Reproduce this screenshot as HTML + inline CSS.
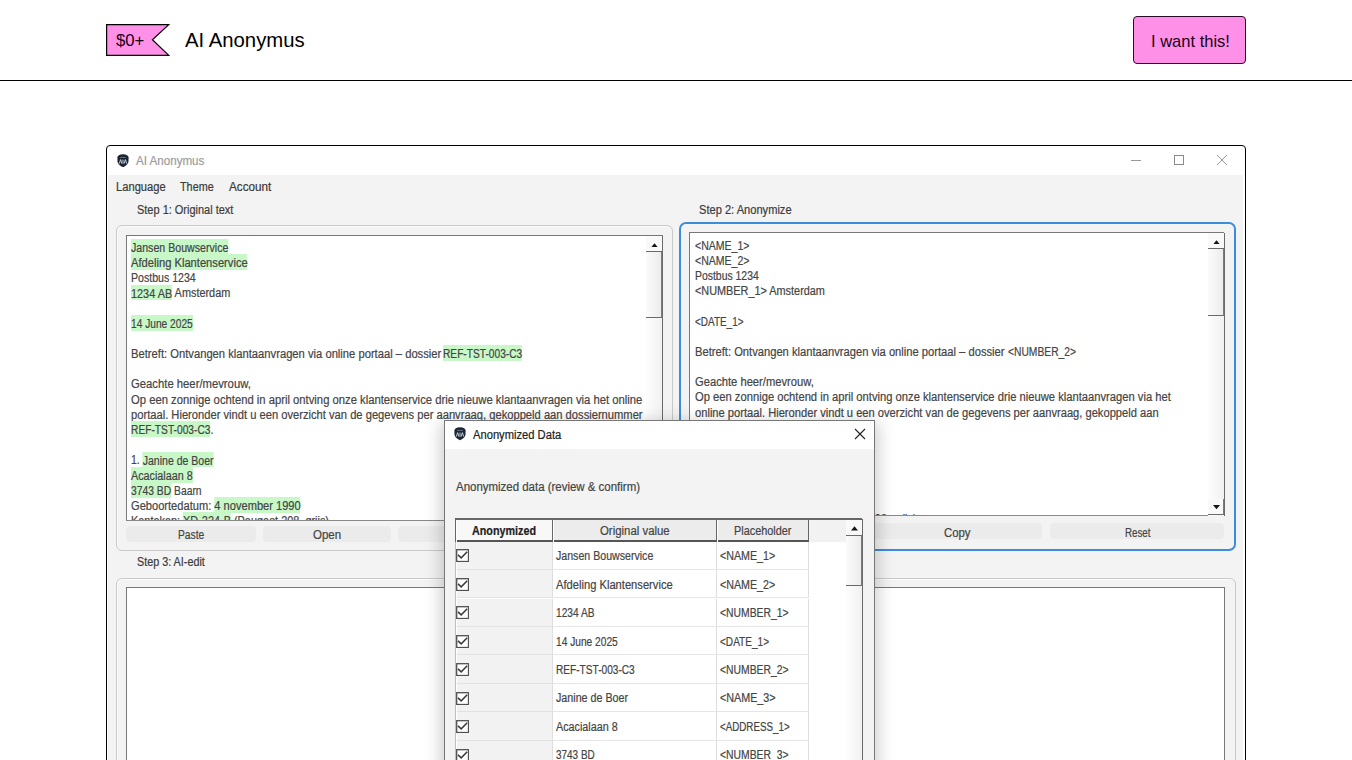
<!DOCTYPE html><html><head><meta charset="utf-8"><style>
*{box-sizing:border-box;margin:0;padding:0}
html,body{width:1352px;height:760px;overflow:hidden;background:#fff;font-family:"Liberation Sans",sans-serif;color:#222;position:relative}
div{position:absolute}
.t{white-space:pre;line-height:normal;-webkit-text-stroke:0.2px currentColor}
.frame{border:1px solid #c9c9c9;border-radius:6px;box-shadow:inset 1px 1px 0 #fbfbfb}
.tb{background:#fff;border-top:1px solid #777;border-left:1px solid #777;border-bottom:1px solid #8a8a8a;overflow:hidden}
.lines{white-space:pre;font-size:12px;line-height:15.1px;color:#333}
.hl{background:#c8f7c8;padding:1.84px 0 0 0}
.btn{background:#ebebeb;border-radius:4px;font-size:12px;color:#333;text-align:center;line-height:15px}
</style></head><body>
<svg style="position:absolute;left:106px;top:24px" width="64" height="33" viewBox="0 0 64 33"><polygon points="0.6,0.6 62.8,0.6 46.4,15.8 62.8,31.4 0.6,31.4" fill="#ff90e8" stroke="#000" stroke-width="1.2"/></svg>
<div class="t" style="left:115.8px;top:32.46px;font-size:16px;color:#1a0019;font-weight:normal;-webkit-text-stroke:0"><span id="f0" style="display:inline-block;transform:scaleX(1.0449);transform-origin:0 50%;">$0+</span></div>
<div class="t" style="left:185px;top:29.15px;font-size:19.6px;color:#000;font-weight:normal;-webkit-text-stroke:0"><span id="f1" style="display:inline-block;transform:scaleX(1.0366);transform-origin:0 50%;">AI Anonymus</span></div>
<div style="left:1133px;top:16px;width:113px;height:48px;background:#ff90e8;border:1px solid #2a0a26;border-radius:4px"></div>
<div class="t" style="left:1150.5px;top:31.98px;font-size:16.2px;color:#1a0019;font-weight:normal;-webkit-text-stroke:0"><span id="f2" style="display:inline-block;transform:scaleX(1.0201);transform-origin:0 50%;">I want this!</span></div>
<div style="left:0;top:80px;width:1352px;height:1px;background:#000"></div>
<div style="left:106px;top:145px;width:1140px;height:700px;border:1.6px solid #000;border-radius:4px 4px 0 0;background:#fff"></div>
<div style="left:107.5px;top:175px;width:1135.5px;height:600px;background:#f3f3f3"></div>
<svg style="position:absolute;left:117px;top:153.5px" width="12" height="13.5" viewBox="0 0 12 13.5"><path d="M0.4 3.6 Q0.6 0.3 6 0.2 Q11.4 0.3 11.6 3.6 L11.5 7.6 Q11 11.3 6 13.3 Q1 11.3 0.5 7.6 Z" fill="#1b2535"/><path d="M2.3 9.6 L3.6 5.6 L4.9 9.6 M6 5.6 L6 9.6 M7.1 9.6 L8.4 5.6 L9.7 9.6" stroke="#d5dbe4" stroke-width="0.9" fill="none"/><path d="M3.2 3.4 H8.8" stroke="#7d8a9c" stroke-width="0.8"/></svg>
<div class="t" style="left:136px;top:154.35px;font-size:12px;color:#9c9c9c;font-weight:normal;"><span id="f3" style="display:inline-block;transform:scaleX(0.9668);transform-origin:0 50%;">AI Anonymus</span></div>
<div style="left:1131px;top:160px;width:10px;height:1px;background:#9a9a9a"></div>
<div style="left:1174px;top:155px;width:10px;height:10px;border:1px solid #8a8a8a"></div>
<svg style="position:absolute;left:1216px;top:154px" width="12" height="12" viewBox="0 0 12 12"><path d="M1 1 L11 11 M11 1 L1 11" stroke="#9a9a9a" stroke-width="1"/></svg>
<div class="t" style="left:116px;top:180.05px;font-size:12px;color:#3a3a3a;font-weight:normal;"><span id="f4" style="display:inline-block;transform:scaleX(0.9308);transform-origin:0 50%;">Language</span></div>
<div class="t" style="left:180px;top:180.05px;font-size:12px;color:#3a3a3a;font-weight:normal;"><span id="f5" style="display:inline-block;transform:scaleX(0.9025);transform-origin:0 50%;">Theme</span></div>
<div class="t" style="left:229px;top:180.05px;font-size:12px;color:#3a3a3a;font-weight:normal;"><span id="f6" style="display:inline-block;transform:scaleX(0.9767);transform-origin:0 50%;">Account</span></div>
<div class="t" style="left:137px;top:202.55px;font-size:12px;color:#3c3c3c;font-weight:normal;"><span id="f7" style="display:inline-block;transform:scaleX(0.9146);transform-origin:0 50%;">Step 1: Original text</span></div>
<div class="t" style="left:699px;top:202.55px;font-size:12px;color:#3c3c3c;font-weight:normal;"><span id="f8" style="display:inline-block;transform:scaleX(0.9253);transform-origin:0 50%;">Step 2: Anonymize</span></div>
<div class="t" style="left:137px;top:555.35px;font-size:12px;color:#3c3c3c;font-weight:normal;"><span id="f9" style="display:inline-block;transform:scaleX(0.8995);transform-origin:0 50%;">Step 3: AI-edit</span></div>
<div class="frame" style="left:116px;top:225px;width:557px;height:326px"></div>
<div style="left:679px;top:222px;width:557px;height:329px;border:2px solid #3a8ddc;border-radius:7px"></div>
<div class="frame" style="left:116px;top:578px;width:1120px;height:300px"></div>
<div class="tb" style="left:126px;top:235px;width:537px;height:286px"></div>
<div style="left:127px;top:236px;width:519px;height:284px;overflow:hidden">
<div class="t" style="left:3.5999999999999943px;top:4.95px;font-size:12px;color:#444;font-weight:normal;line-height:normal"><span id="f10" style="display:inline-block;transform:scaleX(0.8851);transform-origin:0 50%;"><span class="hl">Jansen Bouwservice</span></span></div>
<div class="t" style="left:3.5999999999999943px;top:20.12px;font-size:12px;color:#444;font-weight:normal;line-height:normal"><span id="f11" style="display:inline-block;transform:scaleX(0.9305);transform-origin:0 50%;"><span class="hl">Afdeling Klantenservice</span></span></div>
<div class="t" style="left:3.5999999999999943px;top:35.29px;font-size:12px;color:#444;font-weight:normal;line-height:normal"><span id="f12" style="display:inline-block;transform:scaleX(0.8818);transform-origin:0 50%;">Postbus 1234</span></div>
<div class="t" style="left:3.5999999999999943px;top:50.46px;font-size:12px;color:#444;font-weight:normal;line-height:normal"><span id="f13" style="display:inline-block;transform:scaleX(0.9077);transform-origin:0 50%;"><span class="hl">1234 AB</span> Amsterdam</span></div>
<div class="t" style="left:3.5999999999999943px;top:80.80px;font-size:12px;color:#444;font-weight:normal;line-height:normal"><span id="f14" style="display:inline-block;transform:scaleX(0.8486);transform-origin:0 50%;"><span class="hl">14 June 2025</span></span></div>
<div class="t" style="left:3.5999999999999943px;top:111.14px;font-size:12px;color:#444;font-weight:normal;line-height:normal"><span id="f15" style="display:inline-block;transform:scaleX(0.9340);transform-origin:0 50%;">Betreft: Ontvangen klantaanvragen via online portaal – dossier</span></div>
<div class="t" style="left:315.6px;top:111.14px;font-size:12px;color:#444;font-weight:normal;line-height:normal"><span id="f16" style="display:inline-block;transform:scaleX(0.8487);transform-origin:0 50%;"><span class="hl">REF-TST-003-C3</span></span></div>
<div class="t" style="left:3.5999999999999943px;top:141.48px;font-size:12px;color:#444;font-weight:normal;line-height:normal"><span id="f17" style="display:inline-block;transform:scaleX(0.9405);transform-origin:0 50%;">Geachte heer/mevrouw,</span></div>
<div class="t" style="left:3.5999999999999943px;top:156.65px;font-size:12px;color:#444;font-weight:normal;line-height:normal"><span id="f18" style="display:inline-block;transform:scaleX(0.9381);transform-origin:0 50%;">Op een zonnige ochtend in april ontving onze klantenservice drie nieuwe klantaanvragen via het online</span></div>
<div class="t" style="left:3.5999999999999943px;top:171.82px;font-size:12px;color:#444;font-weight:normal;line-height:normal"><span id="f19" style="display:inline-block;transform:scaleX(0.9307);transform-origin:0 50%;">portaal. Hieronder vindt u een overzicht van de gegevens per aanvraag, gekoppeld aan dossiernummer</span></div>
<div class="t" style="left:3.5999999999999943px;top:186.99px;font-size:12px;color:#444;font-weight:normal;line-height:normal"><span id="f20" style="display:inline-block;transform:scaleX(0.8511);transform-origin:0 50%;"><span class="hl">REF-TST-003-C3</span>.</span></div>
<div class="t" style="left:3.5999999999999943px;top:217.33px;font-size:12px;color:#444;font-weight:normal;line-height:normal"><span id="f21" style="display:inline-block;transform:scaleX(0.8781);transform-origin:0 50%;">1. <span class="hl">Janine de Boer</span></span></div>
<div class="t" style="left:3.5999999999999943px;top:232.50px;font-size:12px;color:#444;font-weight:normal;line-height:normal"><span id="f22" style="display:inline-block;transform:scaleX(0.8980);transform-origin:0 50%;"><span class="hl">Acacialaan 8</span></span></div>
<div class="t" style="left:3.5999999999999943px;top:247.67px;font-size:12px;color:#444;font-weight:normal;line-height:normal"><span id="f23" style="display:inline-block;transform:scaleX(0.8602);transform-origin:0 50%;"><span class="hl">3743 BD</span> Baarn</span></div>
<div class="t" style="left:3.5999999999999943px;top:262.84px;font-size:12px;color:#444;font-weight:normal;line-height:normal"><span id="f24" style="display:inline-block;transform:scaleX(0.9250);transform-origin:0 50%;">Geboortedatum: <span class="hl">4 november 1990</span></span></div>
<div class="t" style="left:3.5999999999999943px;top:278.01px;font-size:12px;color:#444;font-weight:normal;line-height:normal"><span id="f25" style="display:inline-block;transform:scaleX(0.9077);transform-origin:0 50%;">Kenteken: <span class="hl">XD-224-B</span> (Peugeot 208, grijs)</span></div>
</div>
<div style="left:646px;top:236px;width:17px;height:284.5px;background:linear-gradient(to right,#fdfdfd,#f1f1f1);border-right:1px solid #6a6a6a"></div><div style="left:646px;top:236px;width:16px;height:16px;background:#f9f9f9;border-bottom:1.6px solid #6a6a6a"></div><svg style="position:absolute;left:651px;top:242.5px" width="7" height="4.5" viewBox="0 0 7 4.5"><path d="M0 4.5 L3.5 0.3 L7 4.5Z" fill="#151515"/></svg><div style="left:646px;top:252px;width:16px;height:66px;background:linear-gradient(to right,#fbfbfb,#ececec);border-bottom:1.6px solid #6a6a6a;border-right:1px solid #7a7a7a"></div>
<div class="btn" style="left:126px;top:525.6px;width:130px;height:16.4px"></div>
<div class="t" style="left:178.25px;top:528.35px;font-size:12px;color:#444;font-weight:normal;"><span id="f26" style="display:inline-block;transform:scaleX(0.8545);transform-origin:0 50%;">Paste</span></div>
<div class="btn" style="left:263px;top:525.6px;width:128px;height:16.4px"></div>
<div class="t" style="left:313.25px;top:528.35px;font-size:12px;color:#444;font-weight:normal;"><span id="f27" style="display:inline-block;transform:scaleX(0.9588);transform-origin:0 50%;">Open</span></div>
<div class="btn" style="left:398px;top:525.6px;width:129px;height:16.4px"></div>
<div class="t" style="left:449.5px;top:528.35px;font-size:12px;color:#444;font-weight:normal;"><span id="f28" style="display:inline-block;transform:scaleX(0.9394);transform-origin:0 50%;">Save</span></div>
<div class="btn" style="left:534px;top:525.6px;width:128px;height:16.4px"></div>
<div class="t" style="left:584.5px;top:528.35px;font-size:12px;color:#444;font-weight:normal;"><span id="f29" style="display:inline-block;transform:scaleX(0.9414);transform-origin:0 50%;">Clear</span></div>
<div class="tb" style="left:689px;top:232px;width:535px;height:284px"></div>
<div style="left:690px;top:233px;width:518px;height:282px;overflow:hidden">
<div class="t" style="left:4.600000000000023px;top:5.75px;font-size:12px;color:#444;font-weight:normal;"><span id="f30" style="display:inline-block;transform:scaleX(0.8787);transform-origin:0 50%;">&lt;NAME_1&gt;</span></div>
<div class="t" style="left:4.600000000000023px;top:20.92px;font-size:12px;color:#444;font-weight:normal;"><span id="f31" style="display:inline-block;transform:scaleX(0.8787);transform-origin:0 50%;">&lt;NAME_2&gt;</span></div>
<div class="t" style="left:4.600000000000023px;top:36.09px;font-size:12px;color:#444;font-weight:normal;"><span id="f32" style="display:inline-block;transform:scaleX(0.8682);transform-origin:0 50%;">Postbus 1234</span></div>
<div class="t" style="left:4.600000000000023px;top:51.26px;font-size:12px;color:#444;font-weight:normal;"><span id="f33" style="display:inline-block;transform:scaleX(0.9059);transform-origin:0 50%;">&lt;NUMBER_1&gt; Amsterdam</span></div>
<div class="t" style="left:4.600000000000023px;top:81.60px;font-size:12px;color:#444;font-weight:normal;"><span id="f34" style="display:inline-block;transform:scaleX(0.8295);transform-origin:0 50%;">&lt;DATE_1&gt;</span></div>
<div class="t" style="left:4.600000000000023px;top:111.94px;font-size:12px;color:#444;font-weight:normal;"><span id="f35" style="display:inline-block;transform:scaleX(0.9316);transform-origin:0 50%;">Betreft: Ontvangen klantaanvragen via online portaal – dossier</span></div>
<div class="t" style="left:317.6px;top:111.94px;font-size:12px;color:#444;font-weight:normal;"><span id="f36" style="display:inline-block;transform:scaleX(0.8569);transform-origin:0 50%;">&lt;NUMBER_2&gt;</span></div>
<div class="t" style="left:4.600000000000023px;top:142.28px;font-size:12px;color:#444;font-weight:normal;"><span id="f37" style="display:inline-block;transform:scaleX(0.9326);transform-origin:0 50%;">Geachte heer/mevrouw,</span></div>
<div class="t" style="left:4.600000000000023px;top:157.45px;font-size:12px;color:#444;font-weight:normal;"><span id="f38" style="display:inline-block;transform:scaleX(0.9337);transform-origin:0 50%;">Op een zonnige ochtend in april ontving onze klantenservice drie nieuwe klantaanvragen via het</span></div>
<div class="t" style="left:4.600000000000023px;top:172.62px;font-size:12px;color:#444;font-weight:normal;"><span id="f39" style="display:inline-block;transform:scaleX(0.9291);transform-origin:0 50%;">online portaal. Hieronder vindt u een overzicht van de gegevens per aanvraag, gekoppeld aan</span></div>
<div class="t" style="left:4.600000000000023px;top:187.79px;font-size:12px;color:#444;font-weight:normal;">dossiernummer &lt;NUMBER_2&gt;.</div>
<div class="t" style="left:4.600000000000023px;top:218.13px;font-size:12px;color:#444;font-weight:normal;">1. &lt;NAME_3&gt;</div>
<div class="t" style="left:4.600000000000023px;top:233.30px;font-size:12px;color:#444;font-weight:normal;">&lt;ADDRESS_1&gt;</div>
<div class="t" style="left:4.600000000000023px;top:248.47px;font-size:12px;color:#444;font-weight:normal;">&lt;NUMBER_3&gt; Baarn</div>
<div class="t" style="left:4.600000000000023px;top:263.64px;font-size:12px;color:#444;font-weight:normal;">Geboortedatum: &lt;DATE_2&gt;</div>
<div class="t" style="left:4.600000000000023px;top:278.81px;font-size:12px;color:#444;font-weight:normal;"><span id="f40" style="display:inline-block;transform:scaleX(0.9048);transform-origin:0 50%;">Kenteken: &lt;NUMBER_4&gt; (Peugeot 208, grijs)</span></div>
</div>
<div style="left:1208px;top:233px;width:17px;height:282.5px;background:linear-gradient(to right,#fdfdfd,#f1f1f1);border-right:1px solid #6a6a6a"></div><div style="left:1208px;top:233px;width:16px;height:16px;background:#f9f9f9;border-bottom:1.6px solid #6a6a6a"></div><svg style="position:absolute;left:1213px;top:239.5px" width="7" height="4.5" viewBox="0 0 7 4.5"><path d="M0 4.5 L3.5 0.3 L7 4.5Z" fill="#151515"/></svg><div style="left:1208px;top:249px;width:16px;height:67px;background:linear-gradient(to right,#fbfbfb,#ececec);border-bottom:1.6px solid #6a6a6a;border-right:1px solid #7a7a7a"></div><div style="left:1208px;top:498.5px;width:16px;height:16px;background:#f9f9f9;border-bottom:1.6px solid #6a6a6a;border-right:1px solid #7a7a7a"></div><svg style="position:absolute;left:1213px;top:505.0px" width="7" height="4.5" viewBox="0 0 7 4.5"><path d="M0 0 L3.5 4.2 L7 0Z" fill="#151515"/></svg>
<div class="btn" style="left:689px;top:522.6px;width:175px;height:16.4px"></div>
<div class="t" style="left:747.0px;top:526.05px;font-size:12px;color:#444;font-weight:normal;"><span id="f41" style="display:inline-block;transform:scaleX(1.0052);transform-origin:0 50%;">Anonymize</span></div>
<div class="btn" style="left:871px;top:522.6px;width:171px;height:16.4px"></div>
<div class="t" style="left:943.75px;top:526.05px;font-size:12px;color:#444;font-weight:normal;"><span id="f42" style="display:inline-block;transform:scaleX(0.9460);transform-origin:0 50%;">Copy</span></div>
<div class="btn" style="left:1050px;top:522.6px;width:174px;height:16.4px"></div>
<div class="t" style="left:1124.5px;top:526.05px;font-size:12px;color:#444;font-weight:normal;"><span id="f43" style="display:inline-block;transform:scaleX(0.8122);transform-origin:0 50%;">Reset</span></div>
<div class="tb" style="left:126px;top:587px;width:1099px;height:300px;border-right:1px solid #777"></div>
<div style="left:444px;top:420px;width:431px;height:400px;border:1px solid #777;background:#f3f3f3;box-shadow:0 5px 16px 3px rgba(0,0,0,0.20)"></div>
<div style="left:445px;top:421px;width:429px;height:28px;background:#fff"></div>
<svg style="position:absolute;left:454px;top:427px" width="12" height="13.5" viewBox="0 0 12 13.5"><path d="M0.4 3.6 Q0.6 0.3 6 0.2 Q11.4 0.3 11.6 3.6 L11.5 7.6 Q11 11.3 6 13.3 Q1 11.3 0.5 7.6 Z" fill="#1b2535"/><path d="M2.3 9.6 L3.6 5.6 L4.9 9.6 M6 5.6 L6 9.6 M7.1 9.6 L8.4 5.6 L9.7 9.6" stroke="#d5dbe4" stroke-width="0.9" fill="none"/><path d="M3.2 3.4 H8.8" stroke="#7d8a9c" stroke-width="0.8"/></svg>
<div class="t" style="left:473px;top:428.05px;font-size:12px;color:#222;font-weight:normal;"><span id="f44" style="display:inline-block;transform:scaleX(0.9312);transform-origin:0 50%;">Anonymized Data</span></div>
<svg style="position:absolute;left:854px;top:428px" width="12" height="12" viewBox="0 0 12 12"><path d="M1 1 L11 11 M11 1 L1 11" stroke="#222" stroke-width="1.1"/></svg>
<div class="t" style="left:456.3px;top:479.75px;font-size:12px;color:#444;font-weight:normal;"><span id="f45" style="display:inline-block;transform:scaleX(0.9546);transform-origin:0 50%;">Anonymized data (review &amp; confirm)</span></div>
<div style="left:455px;top:518px;width:407px;height:300px;background:#fff;border-left:1px solid #bdbdbd;border-top:1px solid #666"></div>
<div style="left:455px;top:518px;width:1px;height:23.600000000000023px;background:#666"></div>
<div style="left:809px;top:519px;width:37px;height:22.600000000000023px;background:#f2f2f2"></div>
<div style="left:457px;top:519px;width:95.5px;height:22.600000000000023px;background:#f8f8f8;border-bottom:2px solid #555;border-right:1.5px solid #666"></div>
<div class="t" style="left:472.4px;top:523.75px;font-size:12px;color:#222;font-weight:bold;"><span id="f46" style="display:inline-block;transform:scaleX(0.8971);transform-origin:0 50%;">Anonymized</span></div>
<div style="left:553.5px;top:519px;width:163.0px;height:22.600000000000023px;background:#ececec;border-bottom:2px solid #555;border-right:1.5px solid #666"></div>
<div class="t" style="left:599.5px;top:523.75px;font-size:12px;color:#444;font-weight:normal;"><span id="f47" style="display:inline-block;transform:scaleX(0.9498);transform-origin:0 50%;">Original value</span></div>
<div style="left:717.5px;top:519px;width:91.5px;height:22.600000000000023px;background:#ececec;border-bottom:2px solid #555;border-right:1.5px solid #666"></div>
<div class="t" style="left:734.0px;top:523.75px;font-size:12px;color:#444;font-weight:normal;"><span id="f48" style="display:inline-block;transform:scaleX(0.9072);transform-origin:0 50%;">Placeholder</span></div>
<div style="left:457px;top:541.60px;width:95.5px;height:28.45px;background:#f2f2f2;border-bottom:1px solid #e2e2e2;border-right:1px solid #dedede"></div>
<div style="left:552.5px;top:541.60px;width:164px;height:28.45px;background:#fff;border-bottom:1px solid #e6e6e6;border-right:1px solid #dedede"></div>
<div style="left:716.5px;top:541.60px;width:92.5px;height:28.45px;background:#fff;border-bottom:1px solid #e6e6e6;border-right:1px solid #dedede"></div>
<svg style="position:absolute;left:455.6px;top:549.40px" width="13" height="13" viewBox="0 0 13 13"><rect x="0.7" y="0.7" width="11.8" height="11.8" fill="#fff" stroke="#505050" stroke-width="1.3"/><path d="M2 5.9 L5.2 8.9 L11.2 2.8" stroke="#3a3a3a" stroke-width="1.5" fill="none"/></svg>
<div class="t" style="left:556.2px;top:549.15px;font-size:12px;color:#444;font-weight:normal;"><span id="f49" style="display:inline-block;transform:scaleX(0.8842);transform-origin:0 50%;">Jansen Bouwservice</span></div>
<div class="t" style="left:720.4px;top:549.15px;font-size:12px;color:#444;font-weight:normal;"><span id="f50" style="display:inline-block;transform:scaleX(0.8900);transform-origin:0 50%;">&lt;NAME_1&gt;</span></div>
<div style="left:457px;top:570.05px;width:95.5px;height:28.45px;background:#f2f2f2;border-bottom:1px solid #e2e2e2;border-right:1px solid #dedede"></div>
<div style="left:552.5px;top:570.05px;width:164px;height:28.45px;background:#fff;border-bottom:1px solid #e6e6e6;border-right:1px solid #dedede"></div>
<div style="left:716.5px;top:570.05px;width:92.5px;height:28.45px;background:#fff;border-bottom:1px solid #e6e6e6;border-right:1px solid #dedede"></div>
<svg style="position:absolute;left:455.6px;top:577.85px" width="13" height="13" viewBox="0 0 13 13"><rect x="0.7" y="0.7" width="11.8" height="11.8" fill="#fff" stroke="#505050" stroke-width="1.3"/><path d="M2 5.9 L5.2 8.9 L11.2 2.8" stroke="#3a3a3a" stroke-width="1.5" fill="none"/></svg>
<div class="t" style="left:556.2px;top:577.60px;font-size:12px;color:#444;font-weight:normal;"><span id="f51" style="display:inline-block;transform:scaleX(0.9305);transform-origin:0 50%;">Afdeling Klantenservice</span></div>
<div class="t" style="left:720.4px;top:577.60px;font-size:12px;color:#444;font-weight:normal;"><span id="f52" style="display:inline-block;transform:scaleX(0.8900);transform-origin:0 50%;">&lt;NAME_2&gt;</span></div>
<div style="left:457px;top:598.50px;width:95.5px;height:28.45px;background:#f2f2f2;border-bottom:1px solid #e2e2e2;border-right:1px solid #dedede"></div>
<div style="left:552.5px;top:598.50px;width:164px;height:28.45px;background:#fff;border-bottom:1px solid #e6e6e6;border-right:1px solid #dedede"></div>
<div style="left:716.5px;top:598.50px;width:92.5px;height:28.45px;background:#fff;border-bottom:1px solid #e6e6e6;border-right:1px solid #dedede"></div>
<svg style="position:absolute;left:455.6px;top:606.30px" width="13" height="13" viewBox="0 0 13 13"><rect x="0.7" y="0.7" width="11.8" height="11.8" fill="#fff" stroke="#505050" stroke-width="1.3"/><path d="M2 5.9 L5.2 8.9 L11.2 2.8" stroke="#3a3a3a" stroke-width="1.5" fill="none"/></svg>
<div class="t" style="left:556.2px;top:606.05px;font-size:12px;color:#444;font-weight:normal;"><span id="f53" style="display:inline-block;transform:scaleX(0.8472);transform-origin:0 50%;">1234 AB</span></div>
<div class="t" style="left:720.4px;top:606.05px;font-size:12px;color:#444;font-weight:normal;"><span id="f54" style="display:inline-block;transform:scaleX(0.8644);transform-origin:0 50%;">&lt;NUMBER_1&gt;</span></div>
<div style="left:457px;top:626.95px;width:95.5px;height:28.45px;background:#f2f2f2;border-bottom:1px solid #e2e2e2;border-right:1px solid #dedede"></div>
<div style="left:552.5px;top:626.95px;width:164px;height:28.45px;background:#fff;border-bottom:1px solid #e6e6e6;border-right:1px solid #dedede"></div>
<div style="left:716.5px;top:626.95px;width:92.5px;height:28.45px;background:#fff;border-bottom:1px solid #e6e6e6;border-right:1px solid #dedede"></div>
<svg style="position:absolute;left:455.6px;top:634.75px" width="13" height="13" viewBox="0 0 13 13"><rect x="0.7" y="0.7" width="11.8" height="11.8" fill="#fff" stroke="#505050" stroke-width="1.3"/><path d="M2 5.9 L5.2 8.9 L11.2 2.8" stroke="#3a3a3a" stroke-width="1.5" fill="none"/></svg>
<div class="t" style="left:556.2px;top:634.50px;font-size:12px;color:#444;font-weight:normal;"><span id="f55" style="display:inline-block;transform:scaleX(0.8486);transform-origin:0 50%;">14 June 2025</span></div>
<div class="t" style="left:720.4px;top:634.50px;font-size:12px;color:#444;font-weight:normal;"><span id="f56" style="display:inline-block;transform:scaleX(0.8381);transform-origin:0 50%;">&lt;DATE_1&gt;</span></div>
<div style="left:457px;top:655.40px;width:95.5px;height:28.45px;background:#f2f2f2;border-bottom:1px solid #e2e2e2;border-right:1px solid #dedede"></div>
<div style="left:552.5px;top:655.40px;width:164px;height:28.45px;background:#fff;border-bottom:1px solid #e6e6e6;border-right:1px solid #dedede"></div>
<div style="left:716.5px;top:655.40px;width:92.5px;height:28.45px;background:#fff;border-bottom:1px solid #e6e6e6;border-right:1px solid #dedede"></div>
<svg style="position:absolute;left:455.6px;top:663.20px" width="13" height="13" viewBox="0 0 13 13"><rect x="0.7" y="0.7" width="11.8" height="11.8" fill="#fff" stroke="#505050" stroke-width="1.3"/><path d="M2 5.9 L5.2 8.9 L11.2 2.8" stroke="#3a3a3a" stroke-width="1.5" fill="none"/></svg>
<div class="t" style="left:556.2px;top:662.95px;font-size:12px;color:#444;font-weight:normal;"><span id="f57" style="display:inline-block;transform:scaleX(0.8433);transform-origin:0 50%;">REF-TST-003-C3</span></div>
<div class="t" style="left:720.4px;top:662.95px;font-size:12px;color:#444;font-weight:normal;"><span id="f58" style="display:inline-block;transform:scaleX(0.8644);transform-origin:0 50%;">&lt;NUMBER_2&gt;</span></div>
<div style="left:457px;top:683.85px;width:95.5px;height:28.45px;background:#f2f2f2;border-bottom:1px solid #e2e2e2;border-right:1px solid #dedede"></div>
<div style="left:552.5px;top:683.85px;width:164px;height:28.45px;background:#fff;border-bottom:1px solid #e6e6e6;border-right:1px solid #dedede"></div>
<div style="left:716.5px;top:683.85px;width:92.5px;height:28.45px;background:#fff;border-bottom:1px solid #e6e6e6;border-right:1px solid #dedede"></div>
<svg style="position:absolute;left:455.6px;top:691.65px" width="13" height="13" viewBox="0 0 13 13"><rect x="0.7" y="0.7" width="11.8" height="11.8" fill="#fff" stroke="#505050" stroke-width="1.3"/><path d="M2 5.9 L5.2 8.9 L11.2 2.8" stroke="#3a3a3a" stroke-width="1.5" fill="none"/></svg>
<div class="t" style="left:556.2px;top:691.40px;font-size:12px;color:#444;font-weight:normal;"><span id="f59" style="display:inline-block;transform:scaleX(0.8919);transform-origin:0 50%;">Janine de Boer</span></div>
<div class="t" style="left:720.4px;top:691.40px;font-size:12px;color:#444;font-weight:normal;"><span id="f60" style="display:inline-block;transform:scaleX(0.8964);transform-origin:0 50%;">&lt;NAME_3&gt;</span></div>
<div style="left:457px;top:712.30px;width:95.5px;height:28.45px;background:#f2f2f2;border-bottom:1px solid #e2e2e2;border-right:1px solid #dedede"></div>
<div style="left:552.5px;top:712.30px;width:164px;height:28.45px;background:#fff;border-bottom:1px solid #e6e6e6;border-right:1px solid #dedede"></div>
<div style="left:716.5px;top:712.30px;width:92.5px;height:28.45px;background:#fff;border-bottom:1px solid #e6e6e6;border-right:1px solid #dedede"></div>
<svg style="position:absolute;left:455.6px;top:720.10px" width="13" height="13" viewBox="0 0 13 13"><rect x="0.7" y="0.7" width="11.8" height="11.8" fill="#fff" stroke="#505050" stroke-width="1.3"/><path d="M2 5.9 L5.2 8.9 L11.2 2.8" stroke="#3a3a3a" stroke-width="1.5" fill="none"/></svg>
<div class="t" style="left:556.2px;top:719.85px;font-size:12px;color:#444;font-weight:normal;"><span id="f61" style="display:inline-block;transform:scaleX(0.8980);transform-origin:0 50%;">Acacialaan 8</span></div>
<div class="t" style="left:720.4px;top:719.85px;font-size:12px;color:#444;font-weight:normal;"><span id="f62" style="display:inline-block;transform:scaleX(0.8153);transform-origin:0 50%;">&lt;ADDRESS_1&gt;</span></div>
<div style="left:457px;top:740.75px;width:95.5px;height:28.45px;background:#f2f2f2;border-bottom:1px solid #e2e2e2;border-right:1px solid #dedede"></div>
<div style="left:552.5px;top:740.75px;width:164px;height:28.45px;background:#fff;border-bottom:1px solid #e6e6e6;border-right:1px solid #dedede"></div>
<div style="left:716.5px;top:740.75px;width:92.5px;height:28.45px;background:#fff;border-bottom:1px solid #e6e6e6;border-right:1px solid #dedede"></div>
<svg style="position:absolute;left:455.6px;top:748.55px" width="13" height="13" viewBox="0 0 13 13"><rect x="0.7" y="0.7" width="11.8" height="11.8" fill="#fff" stroke="#505050" stroke-width="1.3"/><path d="M2 5.9 L5.2 8.9 L11.2 2.8" stroke="#3a3a3a" stroke-width="1.5" fill="none"/></svg>
<div class="t" style="left:556.2px;top:748.30px;font-size:12px;color:#444;font-weight:normal;"><span id="f63" style="display:inline-block;transform:scaleX(0.8292);transform-origin:0 50%;">3743 BD</span></div>
<div class="t" style="left:720.4px;top:748.30px;font-size:12px;color:#444;font-weight:normal;"><span id="f64" style="display:inline-block;transform:scaleX(0.8644);transform-origin:0 50%;">&lt;NUMBER_3&gt;</span></div>
<div style="left:457px;top:769.20px;width:95.5px;height:28.45px;background:#f2f2f2;border-bottom:1px solid #e2e2e2;border-right:1px solid #dedede"></div>
<div style="left:552.5px;top:769.20px;width:164px;height:28.45px;background:#fff;border-bottom:1px solid #e6e6e6;border-right:1px solid #dedede"></div>
<div style="left:716.5px;top:769.20px;width:92.5px;height:28.45px;background:#fff;border-bottom:1px solid #e6e6e6;border-right:1px solid #dedede"></div>
<svg style="position:absolute;left:455.6px;top:777.00px" width="13" height="13" viewBox="0 0 13 13"><rect x="0.7" y="0.7" width="11.8" height="11.8" fill="#fff" stroke="#505050" stroke-width="1.3"/><path d="M2 5.9 L5.2 8.9 L11.2 2.8" stroke="#3a3a3a" stroke-width="1.5" fill="none"/></svg>
<div class="t" style="left:556.2px;top:776.75px;font-size:12px;color:#444;font-weight:normal;"><span id="f65" style="display:inline-block;transform:scaleX(0.9069);transform-origin:0 50%;">4 november 1990</span></div>
<div class="t" style="left:720.4px;top:776.75px;font-size:12px;color:#444;font-weight:normal;"><span id="f66" style="display:inline-block;transform:scaleX(0.8381);transform-origin:0 50%;">&lt;DATE_2&gt;</span></div>
<div style="left:846px;top:519.5px;width:17px;height:280.5px;background:linear-gradient(to right,#fdfdfd,#f1f1f1);border-right:1px solid #6a6a6a"></div><div style="left:846px;top:519.5px;width:16px;height:16px;background:#f9f9f9;border-bottom:1.6px solid #6a6a6a"></div><svg style="position:absolute;left:851px;top:526.0px" width="7" height="4.5" viewBox="0 0 7 4.5"><path d="M0 4.5 L3.5 0.3 L7 4.5Z" fill="#151515"/></svg><div style="left:846px;top:535.5px;width:16px;height:50.5px;background:linear-gradient(to right,#fbfbfb,#ececec);border-bottom:1.6px solid #6a6a6a;border-right:1px solid #7a7a7a"></div>
<div style="left:456px;top:518.5px;width:407px;height:1px;background:#666"></div>
</body></html>
